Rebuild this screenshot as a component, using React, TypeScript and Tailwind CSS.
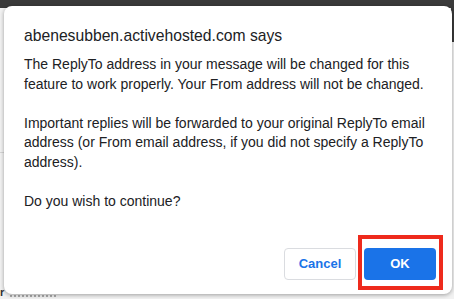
import React from 'react';

const App: React.FC = () => {
  return (
    <div
      className="relative w-[454px] h-[299px] overflow-hidden bg-[#f2f2f2]"
      style={{ fontFamily: '"Liberation Sans", Arial, sans-serif' }}
    >
      {/* page behind the dialog */}
      <div className="absolute top-0 left-0 w-full h-[8px] bg-[#3a3a3a]" />
      <div className="absolute top-0 right-0 w-[3px] h-[42px] bg-[#3a3a3a]" />
      <div className="absolute left-0 top-[152px] w-[4px] h-px bg-[#d6d6d6]" />
      <div className="absolute left-0 top-[286px] text-[11px] leading-[12px] font-bold text-[#333]">r</div>
      <div className="absolute left-[10px] top-[295px] w-[46px] h-[2px] border-t-2 border-dotted border-[#aaa]" />

      <div className="relative ml-[4px] mt-[6px] w-[448px] h-[288px] bg-white rounded-[8px] shadow-[0_1px_4px_rgba(0,0,0,0.35)] flex flex-col px-[20px] pt-[20px]">
        <h1 className="text-[15.7px] leading-[20px] text-[#202124]">abenesubben.activehosted.com says</h1>
        <div className="mt-[9px] text-[14px] leading-[19.5px] text-[#202124] whitespace-pre-line">
          {'The ReplyTo address in your message will be changed for this\nfeature to work properly. Your From address will not be changed.\n\nImportant replies will be forwarded to your original ReplyTo email\naddress (or From email address, if you did not specify a ReplyTo\naddress).\n\nDo you wish to continue?'}
        </div>
        <div className="mt-auto mb-[14px] -mr-[4px] flex justify-end gap-[8px]">
          <button className="w-[72px] h-[32px] rounded-[4px] border border-[#dadce0] bg-white text-[13px] font-bold text-[#1a73e8]">
            Cancel
          </button>
          <button className="w-[72px] h-[32px] rounded-[4px] bg-[#1a73e8] text-[13px] font-bold text-white">
            OK
          </button>
        </div>
        <div className="absolute left-[354px] top-[229px] w-[85px] h-[55px] border-[4px] border-[#ee2a1c]" />
      </div>
    </div>
  );
};

export default App;
